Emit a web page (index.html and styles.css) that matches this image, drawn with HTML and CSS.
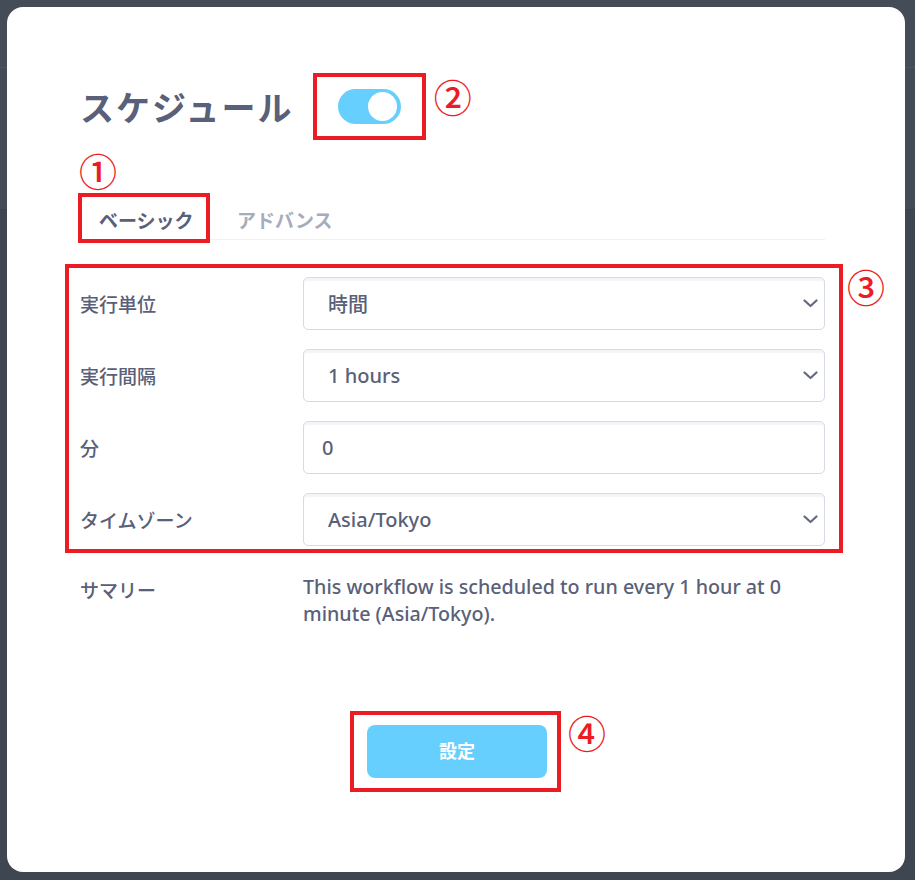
FILE: index.html
```html
<!DOCTYPE html>
<html lang="ja">
<head>
<meta charset="utf-8">
<title>スケジュール</title>
<link rel="stylesheet" href="styles.css">
</head>
<body>
<div class="backdrop">
  <div class="bg-header"></div>
  <div class="bg-sub"></div>
  <div class="bg-rest"></div>
</div>

<div class="modal">
  <div class="head">
    <h1 class="title">スケジュール</h1>
    <div class="mark mark-toggle">
      <span class="toggle"><span class="knob"></span></span>
    </div>
    <span class="num num-2">②</span>
  </div>

  <div class="num num-1">①</div>

  <div class="tabs">
    <div class="mark mark-tab"><span class="tab tab-active">ベーシック</span></div>
    <span class="tab tab-idle">アドバンス</span>
  </div>

  <div class="mark mark-form">
    <div class="row">
      <span class="label">実行単位</span>
      <div class="field field-select"><span>時間</span><svg class="chev" width="15" height="9" viewBox="0 0 15 9"><path d="M1.5 1.5 L7.5 7 L13.5 1.5" fill="none" stroke="#636a80" stroke-width="2.2" stroke-linecap="round" stroke-linejoin="round"/></svg></div>
    </div>
    <div class="row">
      <span class="label">実行間隔</span>
      <div class="field field-select"><span>1 hours</span><svg class="chev" width="15" height="9" viewBox="0 0 15 9"><path d="M1.5 1.5 L7.5 7 L13.5 1.5" fill="none" stroke="#636a80" stroke-width="2.2" stroke-linecap="round" stroke-linejoin="round"/></svg></div>
    </div>
    <div class="row">
      <span class="label">分</span>
      <div class="field field-input"><span>0</span></div>
    </div>
    <div class="row">
      <span class="label">タイムゾーン</span>
      <div class="field field-select"><span>Asia/Tokyo</span><svg class="chev" width="15" height="9" viewBox="0 0 15 9"><path d="M1.5 1.5 L7.5 7 L13.5 1.5" fill="none" stroke="#636a80" stroke-width="2.2" stroke-linecap="round" stroke-linejoin="round"/></svg></div>
    </div>
    <span class="num num-3">③</span>
  </div>

  <div class="summary">
    <span class="label label-summary">サマリー</span>
    <p class="summary-text">This workflow is scheduled to run every 1 hour at 0 minute (Asia/Tokyo).</p>
  </div>

  <div class="actions">
    <div class="mark mark-btn">
      <button class="btn" type="button">設定</button>
      <span class="num num-4">④</span>
    </div>
  </div>
</div>
</body>
</html>
```

FILE: styles.css
```css
* { box-sizing: border-box; }

html, body {
  margin: 0;
  padding: 0;
  height: 100%;
}

body {
  background: #3e4751;
  font-family: "Noto Sans", "Noto Sans CJK JP", sans-serif;
  color: #5a6079;
  overflow: hidden;
}

/* dimmed page behind the modal */
.backdrop {
  display: flex;
  flex-direction: column;
  height: 100%;
}
.bg-header {
  height: 68px;
  background: #444d57;
  border-bottom: 1px solid #4c5560;
}
.bg-sub {
  height: 142px;
  background: #434c56;
  border-bottom: 1px solid #3b434d;
}
.bg-rest {
  flex: 1;
  background: #3e4751;
}

/* modal sits over the page */
.modal {
  position: fixed;
  top: 7px;
  left: 7px;
  width: 898px;
  height: 865px;
  background: #ffffff;
  border-radius: 16px;
  padding: 66px 80px 0 73px;
}

/* red annotation boxes */
.mark {
  border: 4px solid #ec1c24;
  position: relative;
}
.num {
  font-family: "Noto Sans CJK JP", sans-serif;
  color: #ec1c24;
  font-size: 38px;
  line-height: 40px;
  font-weight: 500;
}

.head {
  display: flex;
  align-items: center;
  height: 67px;
}
.title {
  margin: 0;
  font-size: 34px;
  font-weight: 700;
  letter-spacing: 2px;
  color: #596079;
  font-family: "Noto Sans CJK JP", sans-serif;
}
.mark-toggle {
  margin-left: 19px;
  width: 113px;
  height: 67px;
  display: flex;
  align-items: center;
  justify-content: center;
}
.toggle {
  width: 63px;
  height: 35px;
  border-radius: 18px;
  background: #66cffd;
  display: flex;
  align-items: center;
  justify-content: flex-end;
  padding-right: 4px;
}
.knob {
  width: 29px;
  height: 29px;
  border-radius: 50%;
  background: #ffffff;
}
.num-2 {
  margin-left: 8px;
  margin-top: -22px;
}

.num-1 {
  margin-top: 10px;
  height: 40px;
  margin-left: -1px;
}

.tabs {
  margin-top: 3px;
  height: 47px;
  display: flex;
  align-items: flex-start;
  border-bottom: 1px solid #eef0f3;
}
.mark-tab {
  margin-left: -2px;
  width: 132px;
  height: 50px;
  display: flex;
  align-items: center;
  padding: 2px 12px 0 17px;
}
.tab {
  font-family: "Noto Sans CJK JP", sans-serif;
  font-size: 19px;
  font-weight: 700;
  white-space: nowrap;
}
.tab-active { color: #596079; }
.tab-idle {
  color: #a7acbc;
  margin-left: 27px;
  line-height: 50px;
  padding-top: 2px;
}

.mark-form {
  margin: 24px -18px 0 -15px;
  padding: 9px 14px 3px 11px;
  display: flex;
  flex-direction: column;
  gap: 19px;
}
.row {
  display: grid;
  grid-template-columns: 223px 1fr;
  align-items: center;
}
.label {
  font-family: "Noto Sans CJK JP", sans-serif;
  font-size: 19px;
  font-weight: 500;
  color: #596079;
}
.field {
  height: 53px;
  border: 1px solid #d6dae3;
  border-radius: 5px;
  box-shadow: inset 0 3px 0 #f4f5f8;
  display: flex;
  align-items: center;
  font-size: 20px;
  font-weight: 500;
  color: #596079;
}
.field-select {
  justify-content: space-between;
  padding: 0 6px 0 24px;
}
.field-input {
  padding: 0 18px;
}
.chev { display: block; }
.num-3 {
  position: absolute;
  left: calc(100% + 8px);
  top: -2px;
}

.summary {
  margin-top: 20px;
  display: grid;
  grid-template-columns: 223px 1fr;
  align-items: start;
}
.label-summary {
  line-height: 27px;
  padding-top: 3px;
}
.summary-text {
  margin: 0;
  font-size: 19.7px;
  line-height: 27px;
  font-weight: 500;
  color: #596079;
}

.actions {
  margin-top: 84px;
  display: flex;
  justify-content: center;
  padding-left: 6px;
}
.mark-btn {
  width: 211px;
  padding: 10px 10px 10px 13px;
}
.btn {
  display: block;
  width: 180px;
  height: 53px;
  border: none;
  border-radius: 8px;
  background: #66cffd;
  color: #ffffff;
  font-family: "Noto Sans CJK JP", sans-serif;
  font-size: 18px;
  font-weight: 700;
  padding: 0 0 3px;
}
.num-4 {
  position: absolute;
  left: calc(100% + 11px);
  top: -3px;
}
```
